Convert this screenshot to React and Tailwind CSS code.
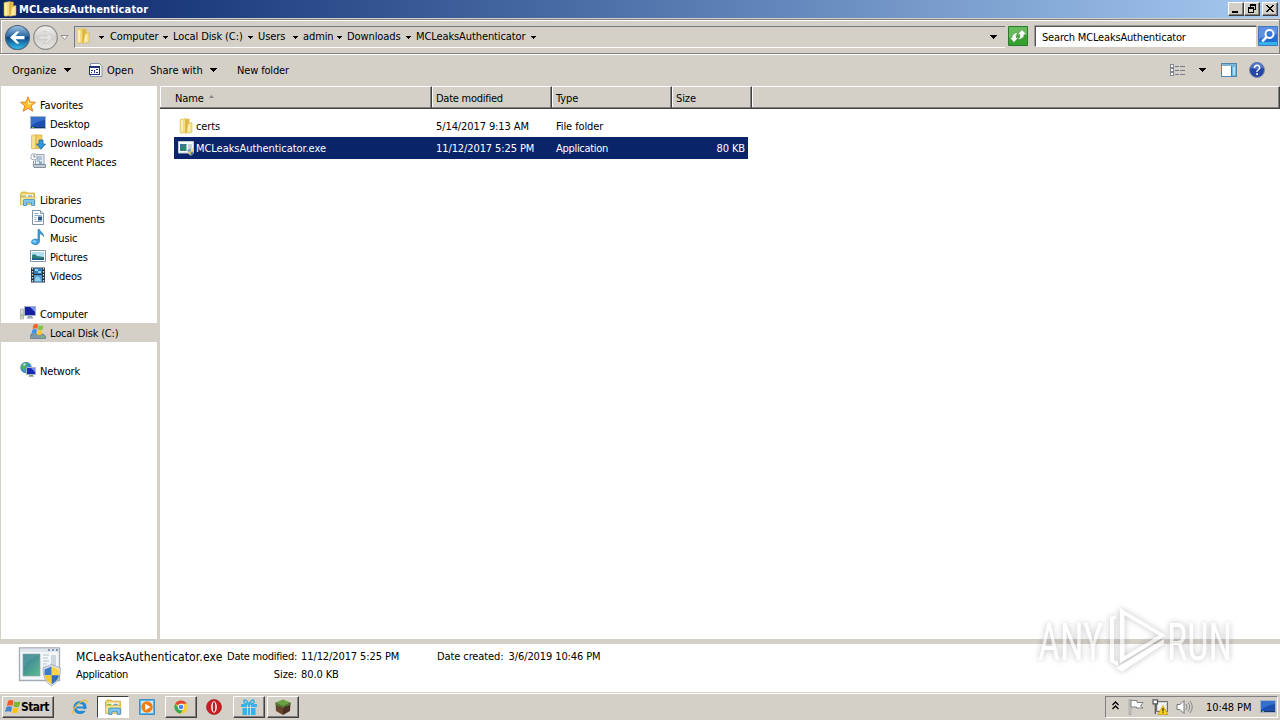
import React from "react";

const FONT = "font-['DejaVu_Sans_Condensed','DejaVu_Sans',sans-serif] [font-stretch:condensed]";

const Caret = ({ className = "" }) => (
  <svg className={"shrink-0 " + className} width="7" height="4" viewBox="0 0 7 4" shapeRendering="crispEdges">
    <path d="M0 0h7v1H6v1H5v1H4v1H3V3H2V2H1V1H0z" fill="#000" />
  </svg>
);
const SmallCaret = () => (
  <svg className="shrink-0" width="5" height="3" viewBox="0 0 5 3" shapeRendering="crispEdges">
    <path d="M0 0h5v1H4v1H3v1H2V2H1V1H0z" fill="#000" />
  </svg>
);

const Svg = ({ children, s = 16, className = "" }) => (
  <svg className={"shrink-0 " + className} width={s} height={s} viewBox="0 0 16 16">{children}</svg>
);

const Folder = ({ className = "" }) => (
  <Svg className={className}>
    <path d="M2 1.500 8 .5v14l-4.500.8L2 14.500z" fill="#f3dc7d" stroke="#d9b955" strokeWidth=".5" />
    <path d="M7 .8h4.500v5L9 15H7z" fill="#e3bd4a" />
    <path d="M10 5.500 14 4.500v9.800l-6.500 1z" fill="#f8e390" stroke="#d0aa40" strokeWidth=".5" />
    <path d="M4 2v12" stroke="#fff5c5" strokeWidth="1.500" /><path d="M8.500 2v12" stroke="#d3ab3c" strokeWidth=".7" /><path d="M11 7v7" stroke="#fff5c5" />
  </Svg>
);
const Monitor = () => (
  <Svg>
    <rect x=".5" y="1.500" width="15" height="12" fill="#1d4fae" stroke="#a9b5c7" />
    <path d="M1 2h14v3Q7 6 1 11z" fill="#3570cc" />
    <path d="M1 12h14v1H1z" fill="#17345c" />
    <path d="M2 12h2v1H2z" fill="#6cc24a" />
  </Svg>
);
const Libs = ({ s }) => (
  <Svg s={s}>
    <path d="M.5 2.500 2 1h4l1 1h7.500v4H.5z" fill="#f0d264" stroke="#c59d2c" strokeWidth=".7" />
    <path d="M2 3.500h11v3H2z" fill="#fff" />
    <path d="M2 4.500h4v1H2z" fill="#5cb531" /><path d="M8 4.500h4v1H8z" fill="#4a90d0" />
    <path d="M.5 6h14.500v7.500H.5z" fill="#f8e496" stroke="#cda63a" strokeWidth=".7" />
    <path d="M3.500 14.500V9.500Q3.500 8.500 4.500 8.500h9q1 0 1 1v5h-3V12H6.500v2.500z" fill="#7cc5ec" stroke="#2f86bb" strokeWidth=".7" />
  </Svg>
);
const icons = {
  star: (
    <Svg>
      <path d="M8 .8 10 6l5.500.3-4.200 3.500 1.400 5.500L8 12.300l-4.700 3 1.400-5.500L.5 6.300 6 6z" fill="#ffbe2e" stroke="#e07a1e" strokeWidth=".9" strokeLinejoin="round" />
      <path d="m8 3 1.200 4L13 7.200 8 9z" fill="#fff1a5" />
    </Svg>
  ),
  desktop: <Monitor />,
  downloads: (
    <Svg>
      <path d="M1.500 1.500 6 .5v14l-4 .5-.5-.5z" fill="#f6e08a" stroke="#cba441" strokeWidth=".6" />
      <path d="M6 1h6v13.500H6z" fill="#f1cf65" stroke="#c9a33b" strokeWidth=".6" />
      <path d="M9 6h4v4h2.500L11 15.300 6.500 10H9z" fill="#3296dc" stroke="#17609d" strokeWidth=".7" />
    </Svg>
  ),
  recent: (
    <Svg>
      <path d="M5.500 1.500H14v10H5.500z" fill="#e8eef4" stroke="#7e8b99" strokeWidth=".8" />
      <path d="M7 4h5M7 6h5M7 8h3" stroke="#6c8eae" strokeWidth=".9" />
      <path d="M3 11.500h12.500v3H4z" fill="#c3ccd5" stroke="#6d7b88" strokeWidth=".8" />
      <circle cx="4" cy="3.800" r="3.200" fill="#f6f9fb" stroke="#8d9ba8" strokeWidth=".8" />
      <path d="M4 1.800v2h1.500" fill="none" stroke="#445" strokeWidth=".7" />
      <path d="M9 8.500h3v3H9z" fill="#7da9cf" /><path d="M3.500 8v4" stroke="#8d9ba8" />
    </Svg>
  ),
  libs: <Libs />,
  docs: (
    <Svg>
      <path d="M2.500.5h8l3 3v11h-11z" fill="#fff" stroke="#75889b" strokeWidth=".9" />
      <path d="M10.500.5v3h3" fill="#d6e1ea" stroke="#75889b" strokeWidth=".8" />
      <path d="M4.500 3.500h4M4.500 5.500h7M4.500 7.500h2M4.500 9.500h2M4.500 11.500h7" stroke="#7fa3c4" strokeWidth=".9" />
      <path d="M8 6.500h4v4H8z" fill="#27588a" />
    </Svg>
  ),
  music: (
    <Svg>
      <path d="M8 .5h1.500c.5 2.500 4.500 3 4 7-.8-2-2-2.600-4-2.800V12c0 5-8 4.500-8 1 0-2.500 4-3.800 6.500-2.300z" fill="#3da0df" stroke="#1c6fae" strokeWidth=".6" />
      <ellipse cx="4.500" cy="12.500" rx="2" ry="1.300" fill="#8bd0f5" />
    </Svg>
  ),
  pics: (
    <Svg>
      <path d="M.5 2.500h15v11H.5z" fill="#fff" stroke="#8497a8" />
      <path d="M2 4h12v8H2z" fill="#b4e0f5" />
      <path d="M2 7q3-2 5 1l7 1v3H2z" fill="#2f7f77" /><path d="M2 10.500h12V12H2z" fill="#1d5790" />
    </Svg>
  ),
  videos: (
    <Svg>
      <path d="M1 .5h14v15H1z" fill="#26323d" />
      <path d="M4 1h8v6H4z" fill="#347bb9" /><path d="M4 8h8v7H4z" fill="#4f9bd2" />
      <path d="M5 2h3v2H5zM8 4h3v2H8zM5 12l2-3 3 2 1 3H5z" fill="#8fd0eb" />
      <path d="M2.500 1v14M13.500 1v14" stroke="#d3dce4" strokeWidth="1.300" strokeDasharray="1.500 1.500" />
    </Svg>
  ),
  computer: (
    <Svg>
      <path d="M.5 4h3v10h-3z" fill="#d5dbd9" stroke="#8e9891" strokeWidth=".6" /><path d="M1.500 9h1v3h-1z" fill="#6caf35" />
      <path d="M4.500 1.500h11v9h-11z" fill="#16219f" stroke="#a7b0c4" />
      <path d="m10 2 5 0v5z" fill="#7b8df4" /><path d="M8 11h4l1.500 2.500h-7z" fill="#9aa6b7" />
    </Svg>
  ),
  disk: (
    <Svg>
      <path d="M1 10h12l2.500 2v2.500H.5v-2.500z" fill="#7f99a9" stroke="#54707f" strokeWidth=".6" />
      <path d="M11 12.500h3v1h-3z" fill="#64dc43" />
      <path d="M3.500.8q2.200-1.500 4.600 0L7.200 5q-2-1.300-4.600 0z" fill="#f0602a" />
      <path d="M8.800 1.200q2 1.300 4.500 0L12.500 5.500q-2 1.200-4.600 0z" fill="#82c341" />
      <path d="M2.400 5.800q2.200-1.400 4.600 0L6 10q-2-1.300-4.500 0z" fill="#3f8fe0" />
      <path d="M7.700 6.200q2 1.200 4.600 0L11.500 10.500q-2 1.200-4.700 0z" fill="#fbc52c" />
    </Svg>
  ),
  network: (
    <Svg>
      <circle cx="6" cy="5.500" r="5.300" fill="#3b8fd0" stroke="#1d6ba5" strokeWidth=".6" />
      <path d="M2 3q3-3 6-2L6 4 4 8 1 6z" fill="#58b64c" /><path d="M3 2q2-1 3 0L4 4z" fill="#c5eff2" />
      <path d="M6.500 5.500h9v7h-9z" fill="#1a28b5" stroke="#aab3c8" /><path d="M11 6h4v4z" fill="#7b8df4" />
      <path d="M9.500 13h3.500l1 1.700H8.500z" fill="#8591a1" />
    </Svg>
  ),
};

const Shield = () => (
  <>
    <path d="M8 0 15.500 2.500Q16 12 8 16 0 12 .5 2.500z" fill="#dce3ea" stroke="#87929c" strokeWidth=".5" />
    <path d="M8 1.500V8H1.700L1.800 3.500z" fill="#3c7cc9" /><path d="M8 1.500l6.200 2L14.300 8H8z" fill="#ffd53b" />
    <path d="M1.800 8H8v6.700Q2.500 12 1.800 8z" fill="#f8cb2d" /><path d="M8 8h6.200Q13.500 12 8 14.700z" fill="#2f6bb7" />
  </>
);

function AppIcon() {
  return (
    <svg className="mb-[2px] shrink-0" width="16" height="16" viewBox="0 0 16 16">
      <path d="M.5 1.500h15v11.500H.5z" fill="#f8fbfc" stroke="#c0cad3" />
      <path d="M2 4h6.500v7H2z" fill="#2e8478" /><path d="M2 4h6L2 8z" fill="#3475a6" />
      <path d="M10 5h4M10 7h4M10 9h3" stroke="#99abb5" />
      <g transform="translate(9 8) scale(.48)" opacity=".8"><Shield /></g>
    </svg>
  );
}
function BigAppIcon() {
  return (
    <svg className="shrink-0" width="44" height="42" viewBox="0 0 44 42">
      <defs>
        <linearGradient id="scr" x2=".8" y2="1"><stop stopColor="#3973a0" /><stop offset="1" stopColor="#56b78b" /></linearGradient>
      </defs>
      <path d="M1.500 1h40v32.500h-40z" fill="#f4f7f9" stroke="#a5abb2" strokeWidth="1.300" />
      <path d="M2 1.500h39V5H2z" fill="#dfe6ed" /><path d="M30 3h2M34 3h2M38 3h2" stroke="#667e9c" strokeWidth="1.500" />
      <path d="M5 7h17v22H5z" fill="url(#scr)" stroke="#8fa4ad" strokeWidth=".7" /><path d="M5 7h17Q9 13 5 22z" fill="#5ba39d" opacity=".6" />
      <path d="M25 8h6M25 11h5M25 14h6M25 17h4M25 20h4" stroke="#b7c3cc" /><path d="M33 8h5v12h-5z" fill="#cbd7e0" />
      <g transform="translate(24.500 17.500) scale(1.150 1.350)"><Shield /></g>
    </svg>
  );
}

const nav = [
  ["star", "Favorites", 0], ["desktop", "Desktop", 1], ["downloads", "Downloads", 1], ["recent", "Recent Places", 1], null,
  ["libs", "Libraries", 0], ["docs", "Documents", 1], ["music", "Music", 1], ["pics", "Pictures", 1], ["videos", "Videos", 1], null,
  ["computer", "Computer", 0], ["disk", "Local Disk (C:)", 1, true], null, ["network", "Network", 0],
];

const crumbs = [
  ["Computer", "w-[63px]"], ["Local Disk (C:)", "w-[85px]"], ["Users", "w-[45px]"],
  ["admin", "w-[44px]"], ["Downloads", "w-[69px]"], ["MCLeaksAuthenticator", "w-[125px]"],
];

const raised = "border border-t-white border-l-white border-r-[#404040] border-b-[#404040] bg-[#d4d0c8] shadow-[inset_-1px_-1px_0_#808080]";

const WinBtn = ({ children, className = "" }) => (
  <div className={"flex h-[14px] w-4 items-center justify-center " + raised + " " + className}>
    <svg width="12" height="10" viewBox="0 0 12 10" shapeRendering="crispEdges">{children}</svg>
  </div>
);

function TitleBar() {
  return (
    <div className="flex h-[18px] shrink-0 items-center bg-linear-to-r from-[#0a246a] to-[#a6caf0] pl-[2px] pr-[2px]">
      <Folder />
      <span className="ml-[1px] grow pt-px font-bold tracking-[0.13px] text-white">MCLeaksAuthenticator</span>
      <WinBtn><path d="M2 7h6v2H2z" /></WinBtn>
      <WinBtn><path d="M4 0h6v6H8V5h1V2H5v1H4zM2 3h6v6H2zM3 5v3h4V5z" fillRule="evenodd" /></WinBtn>
      <WinBtn className="ml-[2px]"><path d="M2 1h2v1h1v1h2V2h1V1h2v1H9v1H8v1H7v1h1v1h1v1h1v1H8V7H7V6H5v1H4v1H2V7h1V6h1V5h1V4H4V3H3V2H2z" /></WinBtn>
    </div>
  );
}

function AddressBar() {
  return (
    <div className="flex h-[37px] shrink-0 items-start border-b border-white pt-px">
      <div className="flex h-[35px] w-full items-start border border-t-[#808080] border-b-[#808080] border-l-[#a09e98] border-r-[#808080] pt-[5px] pl-[3px] shadow-[inset_1px_1px_0_#fff]">
        <svg className="shrink-0" width="66" height="26" viewBox="0 0 66 26">
          <defs>
            <linearGradient id="bk" x2="0" y2="1"><stop stopColor="#9cc3e3" /><stop offset=".45" stopColor="#2b6ba8" /><stop offset=".5" stopColor="#0b4685" /><stop offset="1" stopColor="#37c1ee" /></linearGradient>
            <linearGradient id="fw" x2="0" y2="1"><stop stopColor="#f3f2f0" /><stop offset=".5" stopColor="#d3d1cd" /><stop offset="1" stopColor="#e6e5e2" /></linearGradient>
          </defs>
          <circle cx="13.500" cy="12.500" r="12" fill="url(#bk)" stroke="#4f6681" strokeWidth="1.200" />
          <path d="M6 12.500 12.500 6.500h3L11.500 11H20.500v3.200H11.500l4 4.300h-3z" fill="#fff" />
          <circle cx="41.500" cy="12.500" r="11.800" fill="url(#fw)" stroke="#8b8b89" strokeWidth="1.200" />
          <path d="M49 12.500 42.500 6.500h-3L43.500 11H34.500v3.200h9l-4 4.300h3z" fill="#e4e3e1" stroke="#c3c1be" strokeWidth=".6" />
          <path d="M57 10.500h7l-3.500 4z" fill="#fff" stroke="#888" strokeWidth=".9" />
        </svg>
        <div className="mt-px ml-[4px] flex h-[22px] w-[931px] shrink-0 items-center border-t border-l border-t-[#6f7a80] border-l-[#6f7a80] border-b border-b-white">
          <Folder className="mb-[2px]" />
          <span className="ml-[8px] flex w-[11px]"><SmallCaret /></span>
          {crumbs.map(([t, w]) => (
            <div key={t} className={"flex shrink-0 items-center justify-between whitespace-nowrap " + w}>
              <span>{t}</span>
              <span className="flex w-[10px]"><SmallCaret /></span>
            </div>
          ))}
          <Caret className="mr-[8px] ml-auto" />
        </div>
        <svg className="mt-px ml-[3px] shrink-0" width="20" height="20" viewBox="0 0 20 20">
          <path d="M.5.5h19v19H.5z" fill="#36a12f" stroke="#2c7b2a" /><path d="M1 1h18v8Q9 9 1 12z" fill="#68bb5d" />
          <path d="M1.500 8.500 6 3.500l4.500 5H8q0 3 2 5Q4 13 4 8.500zM18.500 11.500 14 16.500l-4.500-5H12q0-3-2-5 6 .5 6 5z" fill="#fff" stroke="#338a2d" strokeWidth=".5" transform="rotate(180 10 10) scale(-1 1) translate(-20 0)" />
        </svg>
        <div className="mt-[1px] ml-[7px] flex h-[21px] w-[222px] shrink-0 items-center border border-t-[#555] border-l-[#555] border-r-[#d4d0c8] border-b-white bg-white pl-[6px] shadow-[-1px_-1px_0_#999]">
          <span className="pt-[2px] tracking-[-0.18px]">Search MCLeaksAuthenticator</span>
        </div>
        <svg className="mt-px ml-[1px] shrink-0" width="20" height="20" viewBox="0 0 20 20">
          <path d="M.5.5h19v19H.5z" fill="#246bd2" stroke="#4278be" /><path d="M1 1h18v7Q9 9 1 13z" fill="#5d8fe3" /><path d="M1 16h18v3H1z" fill="#35b3ed" />
          <circle cx="11.500" cy="8" r="4" fill="#3778d8" stroke="#fff" strokeWidth="2" /><path d="m8.700 10.800-4.500 4.500" stroke="#fff" strokeWidth="2.600" />
        </svg>
      </div>
    </div>
  );
}

function Toolbar() {
  return (
    <div className="flex h-[31px] shrink-0 items-center pr-[15px] pb-px pl-3 tracking-normal">
      <span className="w-[52px] pt-[2px] whitespace-nowrap">Organize</span>
      <Caret />
      <svg className="ml-[18px] shrink-0" width="15" height="16" viewBox="0 0 15 16">
        <path d="M1.500 1.500h9l2.500 3v10H1.500z" fill="#fff" stroke="#8291a4" /><path d="M0 4h11v9H0z" fill="#1e2f78" /><path d="M1 6h9v6H1z" fill="#fff" />
        <path d="M2 8h2v1H2zM5 8h1v3H5zM7 7h2v1H7zM2 10h1v1H2zM7 10h2v1H7z" fill="#26357f" />
      </svg>
      <span className="ml-[3px] w-[43px] pt-[2px]">Open</span>
      <span className="w-[60px] pt-[2px] whitespace-nowrap">Share with</span>
      <Caret />
      <span className="ml-5 grow pt-[2px] tracking-[-0.15px]">New folder</span>
      <svg width="16" height="13" viewBox="0 0 16 13" shapeRendering="crispEdges">
        <path d="M.5.5h3v3h-3zM.5 4.500h3v3h-3zM.5 8.500h3v3h-3z" fill="#fff" stroke="#808692" />
        <path d="M5 2h4v1H5zM10 2h5v1h-5zM5 6h4v1H5zM10 6h5v1h-5zM5 10h4v1H5zM10 10h5v1h-5z" fill="#747b86" />
      </svg>
      <Caret className="ml-[13px]" />
      <svg className="ml-[15px]" width="16" height="14" viewBox="0 0 16 14" shapeRendering="crispEdges">
        <path d="M.5.5h15v13H.5z" fill="#fff" stroke="#4e86ae" /><path d="M1 1h14v2H1z" fill="#7fb4d5" /><path d="M10 3h5v10h-5z" fill="#6db9e0" /><path d="M10 3h1v10h-1z" fill="#3f7b9f" /><path d="M12 4h2v8h-2z" fill="#b0def1" />
      </svg>
      <svg className="ml-3" width="16" height="16" viewBox="0 0 16 16">
        <circle cx="8" cy="8" r="7.500" fill="#2447a8" stroke="#7d8da8" /><path d="M2 6a6 6 0 0 1 12 0Q8 8 2 6" fill="#5576c6" />
        <path d="M5.500 6q0-2.700 2.600-2.700T10.600 6q0 1-1.500 2T8 10" fill="none" stroke="#fff" strokeWidth="1.500" /><path d="M7.200 11.200h1.700v1.700H7.200z" fill="#fff" />
      </svg>
    </div>
  );
}

const Col = ({ children, className }) => (
  <div className={"flex h-[23px] items-center border-t border-r border-t-white border-r-[#404040] border-b border-b-[#404040] pt-[2px] pl-[4px] shadow-[inset_-1px_-1px_0_#808080,inset_1px_0_0_#fff] " + className}>{children}</div>
);

function Watermark() {
  return (
    <svg className="pointer-events-none absolute top-[600px] left-[1030px]" width="250" height="80" viewBox="0 0 250 80">
      <g fill="#fff" opacity=".58" className="drop-shadow-[0_0_3px_rgba(0,0,0,0.45)]">
        <text x="8" y="60" textLength="65" lengthAdjust="spacingAndGlyphs" className="font-[Roboto,sans-serif] text-[52px]">ANY</text>
        <text x="137" y="60" textLength="65" lengthAdjust="spacingAndGlyphs" className="font-[Roboto,sans-serif] text-[52px]">RUN</text>
        <path d="M80 17l6-2v4h-2v41l4 2v4l-8-4z" />
        <path d="M90 8 136 35.500 90 63zM94.500 15v41L129 35.500z" fillRule="evenodd" />
        <path d="M89 66 134 39v5L92 71.500l-6-3.500z" />
      </g>
    </svg>
  );
}

const Task = ({ children, className = "" }) => (
  <div className={"flex h-[22px] w-8 shrink-0 items-center justify-center " + className}>{children}</div>
);

function Taskbar() {
  return (
    <div className="flex h-[27px] shrink-0 items-start border-t border-white bg-[#d4d0c8] pt-[2px] pl-[2px]">
      <div className={"flex h-[22px] w-[52px] items-center " + raised}>
        <svg className="mb-px ml-px shrink-0" width="17" height="16" viewBox="0 0 17 16">
          <path d="M4 2q3-2 5.500 0L8.500 7Q6 5.500 3 7z" fill="#ef5a28" /><path d="M10.500 2.500q2 1.500 6 0L15 7.500q-3 1.500-5.500-.3z" fill="#76b82a" />
          <path d="M2.500 8Q5.500 6.500 8 8l-1 5q-2.500-1.500-6 0z" fill="#3d86d8" /><path d="M9 8.500q2.500 1.500 5.500 0l-1 5q-3 1.500-5.500 0z" fill="#fbc21d" />
        </svg>
        <span className="text-[12px] font-bold tracking-[-0.6px]">Start</span>
      </div>
      <Task className="ml-[10px]">
        <Svg>
          <circle cx="8" cy="8.500" r="5" fill="none" stroke="#2489d6" strokeWidth="3.200" /><path d="M5 7.500h8v2H5z" fill="#2489d6" /><path d="M10 10h6v1.800h-6z" fill="#d4d0c8" />
          <path d="M2 15Q-1 13 5 6q7-6 9.500-4.500 1 1-.7 3" fill="none" stroke="#e9bd39" strokeWidth="1.300" />
        </Svg>
      </Task>
      <Task className="ml-px border border-t-[#404040] border-l-[#404040] border-r-white border-b-white bg-white"><Libs s={17} /></Task>
      <Task className="ml-[2px]">
        <Svg>
          <path d="M.5.500h15v15H.5z" fill="#5bb3e8" stroke="#3c8fc8" /><path d="M2 2h12v12H2z" fill="#cde9f8" />
          <circle cx="8" cy="8" r="5.700" fill="#f07d14" /><path d="M6.200 4.700 11.500 8l-5.300 3.300z" fill="#fff" />
        </Svg>
      </Task>
      <Task className={"ml-[2px] " + raised}>
        <Svg s={14}>
          <circle cx="8" cy="8" r="7.500" fill="#f8cd34" /><path d="M8 8 1.500 4.200A7.500 7.500 0 0 1 14.500 4.400H8z" fill="#df4636" />
          <path d="M1.500 4.200A7.500 7.500 0 0 0 7.500 15.500L11 9.500 5 9.500z" fill="#35a853" /><circle cx="8" cy="8" r="3.600" fill="#fff" /><circle cx="8" cy="8" r="2.700" fill="#4285f4" />
        </Svg>
      </Task>
      <Task className="ml-px">
        <Svg><circle cx="8" cy="8" r="7.500" fill="#c91d23" stroke="#a01418" strokeWidth=".6" /><ellipse cx="8" cy="8" rx="2.800" ry="5.700" fill="#fff" /><ellipse cx="8" cy="8" rx="1.300" ry="4.900" fill="#a8272b" /></Svg>
      </Task>
      <Task className={"ml-[3px] " + raised}>
        <Svg>
          <path d="M0 5h16v3H0zM1.500 9h13v7h-13z" fill="#36b2e4" /><path d="M6 5h.8v11H6zM9.200 5h.8v11h-.8z" fill="#d4edf7" />
          <path d="M8 5Q2 5 3 2t5 3q4-6 5-3T8 5" fill="none" stroke="#36b2e4" strokeWidth="1.500" />
        </Svg>
      </Task>
      <Task className={"ml-[2px] " + raised}>
        <Svg>
          <path d="m8 .5 7.500 3L8 7 .5 3.500z" fill="#6ca342" /><path d="M.5 3.500 8 7v9L1 12z" fill="#66432d" /><path d="M15.500 3.500 8 7v9l7-4z" fill="#4a2f20" />
          <path d="M.5 3.500 8 7v2L6 7.500v1L4 7 3 7.500.5 5.500zM15.500 3.500 8 7v2l2-1v-1l2 .5 3.500-2z" fill="#4c7c31" />
        </Svg>
      </Task>
      <div className="mr-[2px] ml-auto flex h-[22px] w-[173px] items-center border border-t-[#808080] border-l-[#808080] border-r-white border-b-white pl-[6px] whitespace-nowrap">
        <svg className="mb-1" width="7" height="9" viewBox="0 0 7 9"><path d="M.5 4 3.500 1l3 3M.5 8l3-3 3 3" fill="none" stroke="#000" strokeWidth="1.300" /></svg>
        <svg className="ml-[9px]" width="16" height="16" viewBox="0 0 16 16"><path d="M2 .500v15" stroke="#777" strokeWidth="2.400" /><path d="M2 1v14" stroke="#fff" /><path d="M3 1.500h6v2h6l-2.500 3.500 2.500 2H8.500v-1H3z" fill="#fff" stroke="#777" strokeWidth=".9" /></svg>
        <svg className="ml-[8px]" width="17" height="16" viewBox="0 0 17 16"><path d="M4.500 2.500h11v10h-11z" fill="#d3d5d6" stroke="#6c6f72" /><path d="M6 4h8v7H6z" fill="#f2f3f4" /><path d="M1 .8h4.500v4H1zM3.300 4.800V15" fill="#fff" stroke="#555" strokeWidth="1.200" /><path d="m11 6.500 5 9H6z" fill="#fbd321" stroke="#c69500" strokeWidth=".7" /><path d="M10.500 9h1v3.500h-1zM10.500 13.300h1v1h-1z" /></svg>
        <svg className="ml-[7px]" width="17" height="16" viewBox="0 0 17 16"><path d="M1 5.500h3l4-4v13l-4-4H1z" fill="#fff" stroke="#777" /><path d="M10 5q2 3 0 6M12 3.500q3.500 4.500 0 9M14 2q4.500 6 0 12" fill="none" stroke="#888" /></svg>
        <span className="ml-[13px] w-[54px] pt-[2px]">10:48 PM</span>
        <Monitor />
      </div>
    </div>
  );
}

export default function App() {
  return (
    <div className={"relative flex h-[720px] w-[1280px] flex-col overflow-hidden bg-[#d4d0c8] text-[11px] leading-[14px] tracking-[-0.1px] text-black " + FONT}>
      <TitleBar />
      <AddressBar />
      <Toolbar />
      <div className="flex h-[553px] shrink-0">
        <div className="ml-px w-[156px] shrink-0 bg-white pt-[9px] tracking-[-0.18px]">
          {nav.map((n, i) => n ? (
            <div key={i} className={"flex h-[19px] w-[158px] gap-1 whitespace-nowrap " + (n[2] ? "pt-px pl-[29px] " : "pt-px pl-[19px] ") + (n[3] ? "bg-[#d4d0c8]" : "")}>
              {icons[n[0]]}<span className="pt-[3px]">{n[1]}</span>
            </div>
          ) : <div key={i} className="h-[19px]" />)}
        </div>
        <div className="ml-[3px] grow bg-white">
          <div className="flex bg-[#d4d0c8]">
            <Col className="w-[272px] pl-[15px]">Name
              <svg className="mb-1 ml-[5px]" width="5" height="3"><path d="M0 3h5L2.500 0z" fill="#888" /></svg>
            </Col>
            <Col className="w-[120px] tracking-[-0.25px]">Date modified</Col>
            <Col className="w-[120px]">Type</Col>
            <Col className="w-[80px]">Size</Col>
            <Col className="grow" />
          </div>
          <div className="mt-[6px] ml-[14px] w-[574px] whitespace-nowrap">
            <div className="flex h-[22px] items-center pt-px pl-1"><Folder className="mb-[2px]" /><span className="ml-[2px] w-[240px]">certs</span><span className="w-[120px]">5/14/2017 9:13 AM</span><span>File folder</span></div>
            <div className="flex h-[22px] items-center bg-[#0a246a] pt-px pr-[3px] pl-1 text-white"><AppIcon /><span className="ml-[2px] w-[240px] tracking-[-0.05px]">MCLeaksAuthenticator.exe</span><span className="w-[120px]">11/12/2017 5:25 PM</span><span className="grow tracking-[-0.3px]">Application</span><span>80 KB</span></div>
          </div>
        </div>
      </div>
      <div className="mt-[5px] flex h-[48px] shrink-0 bg-white pt-[3px] pl-[18px] whitespace-nowrap">
        <BigAppIcon />
        <div className="ml-[14px] w-[151px] pt-[3px]"><div className="h-[18px] text-[12px] tracking-[0.14px]">MCLeaksAuthenticator.exe</div><div className="tracking-[-0.3px]">Application</div></div>
        <div className="w-[70px] pt-[3px] text-right"><div className="h-[18px] tracking-[-0.25px]">Date modified:</div><div>Size:</div></div>
        <div className="ml-[4px] w-[136px] pt-[3px]"><div className="h-[18px]">11/12/2017 5:25 PM</div><div>80.0 KB</div></div>
        <div className="flex gap-[5px] pt-[3px]"><span>Date created:</span><span>3/6/2019 10:46 PM</span></div>
      </div>
      <div className="h-px shrink-0" />
      <Taskbar />
      <Watermark />
    </div>
  );
}
